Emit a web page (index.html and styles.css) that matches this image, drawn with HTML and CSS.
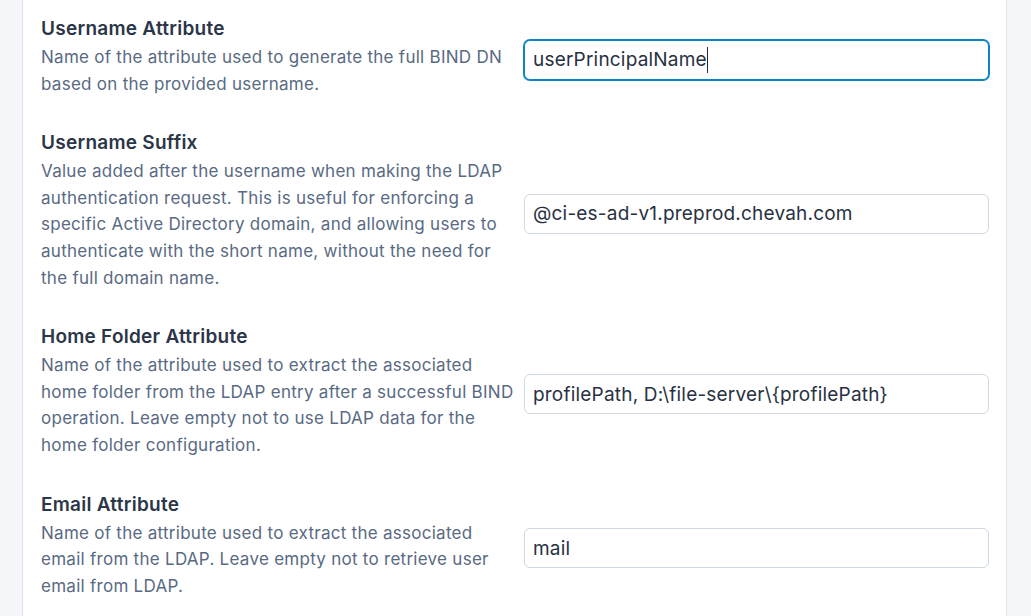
FILE: index.html
```html
<!DOCTYPE html>
<html lang="en">
<head>
<meta charset="utf-8">
<title>LDAP settings</title>
<link rel="stylesheet" href="styles.css">
</head>
<body>
<div class="panel">
  <div class="row">
    <div class="info">
      <div class="title">Username Attribute</div>
      <div class="desc">Name of the attribute used to generate the full BIND DN based on the provided username.</div>
    </div>
    <div class="field focused">userPrincipalName<span class="caret"></span></div>
  </div>
  <div class="row">
    <div class="info">
      <div class="title">Username Suffix</div>
      <div class="desc">Value added after the username when making the LDAP authentication request. This is useful for enforcing a specific Active Directory domain, and allowing users to authenticate with the short name, without the need for the full domain name.</div>
    </div>
    <div class="field">@ci-es-ad-v1.preprod.chevah.com</div>
  </div>
  <div class="row">
    <div class="info">
      <div class="title">Home Folder Attribute</div>
      <div class="desc">Name of the attribute used to extract the associated home folder from the LDAP entry after a successful BIND operation. Leave empty not to use LDAP data for the home folder configuration.</div>
    </div>
    <div class="field">profilePath, D:\file-server\{profilePath}</div>
  </div>
  <div class="row">
    <div class="info">
      <div class="title">Email Attribute</div>
      <div class="desc">Name of the attribute used to extract the associated email from the LDAP. Leave empty not to retrieve user email from LDAP.</div>
    </div>
    <div class="field">mail</div>
  </div>
</div>
</body>
</html>
```
FILE: styles.css
```css
html, body {
  margin: 0;
  padding: 0;
  background: #f5f7fa;
  height: 616px;
  overflow: hidden;
}
body {
  font-family: Inter, "Noto Sans", sans-serif;
}
.panel {
  margin-left: 22px;
  width: 985px;
  background: #ffffff;
  border-left: 1px solid #dfe4ec;
  border-right: 1px solid #dfe4ec;
  padding: 16px 17px 40px 18px;
  box-sizing: border-box;
  display: flex;
  flex-direction: column;
  gap: 27px;
  min-height: 616px;
}
.row {
  display: grid;
  grid-template-columns: 474px 465px;
  column-gap: 9px;
  align-items: center;
}
.info {
  padding-bottom: 6px;
}
.title {
  font-size: 19px;
  line-height: 26px;
  font-weight: 600;
  letter-spacing: 0.25px;
  color: #2b3648;
  margin-bottom: 2px;
}
.desc {
  font-size: 17px;
  line-height: 26.6px;
  letter-spacing: 0.27px;
  color: #596a83;
}
.field {
  height: 40px;
  box-sizing: border-box;
  border: 1px solid #cfd8e3;
  border-radius: 6px;
  padding: 0 8px;
  display: flex;
  align-items: center;
  font-size: 19px;
  letter-spacing: 0.2px;
  color: #273142;
  background: #fff;
}
.field.focused {
  border-color: #0b84c6;
  box-shadow: 0 0 0 1px #0b84c6;
}
.caret {
  display: inline-block;
  width: 1px;
  height: 26px;
  background: #1f2937;
}
```
